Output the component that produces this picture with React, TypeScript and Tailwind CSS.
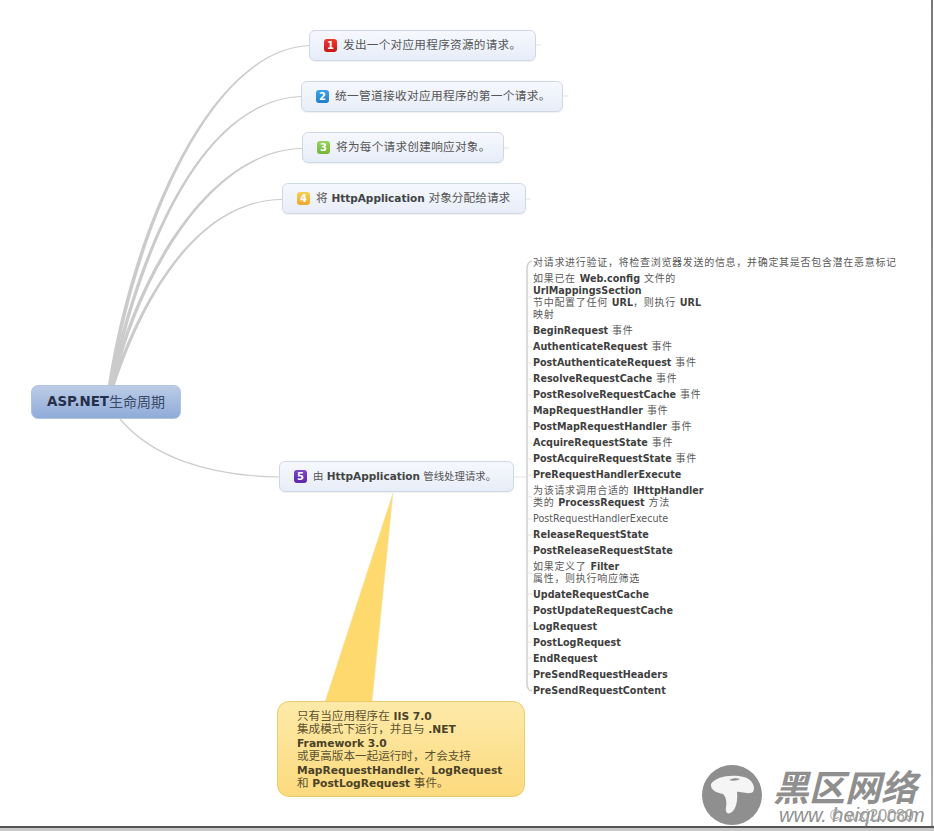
function B({ children, className = 'text-[9.6px] tracking-normal text-[#3f3f3f]' }: { children: React.ReactNode; className?: string }) {
  return <span className={`font-bold ${className}`}>{children}</span>;
}

const eventRows: React.ReactNode[] = [
  <>对请求进行验证，将检查浏览器发送的信息，并确定其是否包含潜在恶意标记</>,
  <>如果已在 <B>Web.config</B> 文件的<br /><B>UrlMappingsSection</B><br />节中配置了任何 <B>URL</B>，则执行 <B>URL</B><br />映射</>,
  <><B>BeginRequest</B> 事件</>,
  <><B>AuthenticateRequest</B> 事件</>,
  <><B>PostAuthenticateRequest</B> 事件</>,
  <><B>ResolveRequestCache</B> 事件</>,
  <><B>PostResolveRequestCache</B> 事件</>,
  <><B>MapRequestHandler</B> 事件</>,
  <><B>PostMapRequestHandler</B> 事件</>,
  <><B>AcquireRequestState</B> 事件</>,
  <><B>PostAcquireRequestState</B> 事件</>,
  <><B>PreRequestHandlerExecute</B></>,
  <>为该请求调用合适的 <B>IHttpHandler</B><br />类的 <B>ProcessRequest</B> 方法</>,
  <span className="text-[9.6px] tracking-normal">PostRequestHandlerExecute</span>,
  <><B>ReleaseRequestState</B></>,
  <><B>PostReleaseRequestState</B></>,
  <>如果定义了 <B>Filter</B><br />属性，则执行响应筛选</>,
  <><B>UpdateRequestCache</B></>,
  <><B>PostUpdateRequestCache</B></>,
  <><B>LogRequest</B></>,
  <><B>PostLogRequest</B></>,
  <><B>EndRequest</B></>,
  <><B>PreSendRequestHeaders</B></>,
  <><B>PreSendRequestContent</B></>,
];

function Badge({ n, className }: { n: number; className: string }) {
  return (
    <span className={`flex h-[13px] w-[13px] shrink-0 items-center justify-center rounded-[3px] bg-gradient-to-b text-[10px] leading-none font-bold tracking-normal text-white ${className}`}>
      {n}
    </span>
  );
}

function Topic({ n, badge, className, children }: { n: number; badge: string; className: string; children: React.ReactNode }) {
  return (
    <div className={`absolute flex h-[31px] items-center gap-[6px] rounded-[6px] border border-[#d0d7e4] bg-gradient-to-b from-[#f6f8fd] to-[#e7edf8] pl-[14px] text-[#555555] shadow-[0_1px_1px_rgba(0,0,0,0.06)] ${className}`}>
      <Badge n={n} className={badge} />
      <span className="pt-[1px] whitespace-nowrap">{children}</span>
    </div>
  );
}

const topicBold = 'text-[10.5px] tracking-normal text-[#444444]';
const noteBold = 'text-[10.7px] text-[#4a4228]';

export default function App() {
  return (
    <div className="relative h-[831px] w-[934px] overflow-hidden bg-white font-['DejaVu_Sans','Noto_Sans_CJK_SC',sans-serif]">
      {/* connectors and callout pointer */}
      <svg className="absolute inset-0" width="934" height="831" fill="none">
        <path d="M108 385 C130 240 205 50 309 45 L309 46 C206 51 133 245 112 385 Z" fill="#cbcbcb" />
        <path d="M109 385 C138 250 200 100 301 96 L301 97 C201 101 140 255 113 385 Z" fill="#cbcbcb" />
        <path d="M110 385 C138 270 210 150 302 148 L302 149 C211 151 140 275 114 385 Z" fill="#cbcbcb" />
        <path d="M111 385 C140 300 195 200 282 199 L282 200 C196 201 142 303 115 385 Z" fill="#cbcbcb" />
        <path d="M120 419 C150 455 205 476 279 477" stroke="#cccccc" strokeWidth="1.2" />
        <path d="M536 45H541M563 96H568M504 148H509M526 199H531M514 477H526" stroke="#e2e2e2" />
        <path d="M532 261 Q527 262 527 269 V684 Q527 690 532 691" stroke="#d2d2d2" strokeWidth="1.6" />
        <path d="M527 297H532M527 331H532M527 347H532M527 363H532M527 379H532M527 395H532M527 411H532M527 427H532M527 443H532M527 459H532M527 475H532M527 497H532M527 519H532M527 535H532M527 551H532M527 573H532M527 594H532M527 610H532M527 626H532M527 642H532M527 658H532M527 674H532" stroke="#e2e2e2" />
        <polygon points="393,493 372,702 325,702" fill="#fdd96e" stroke="#f6e3a6" strokeWidth="0.6" />
      </svg>

      {/* root */}
      <div className="absolute top-[385px] left-[31px] flex h-[34px] w-[150px] items-center justify-center rounded-[7px] border border-[#b3c4e0] bg-gradient-to-b from-[#bccce6] to-[#8fabd9] text-[14px] text-[#3a4866]">
        <span className="text-[13.4px] font-bold text-[#26304a]">ASP.NET</span>生命周期
      </div>

      <Topic n={1} badge="from-[#ec3a30] to-[#c81412]" className="top-[30px] left-[309px] w-[227px] text-[11.6px] tracking-[0.3px]">发出一个对应用程序资源的请求。</Topic>
      <Topic n={2} badge="from-[#3ba4e6] to-[#1f7fcc]" className="top-[81px] left-[301px] w-[262px] text-[11.7px] tracking-[0.3px]">统一管道接收对应用程序的第一个请求。</Topic>
      <Topic n={3} badge="from-[#9bd35a] to-[#74b533]" className="top-[132px] left-[302px] w-[202px] text-[11.6px] tracking-[0.3px]">将为每个请求创建响应对象。</Topic>
      <Topic n={4} badge="from-[#f7cf55] to-[#eba92c]" className="top-[183px] left-[282px] w-[244px] text-[11.7px]">将 <B className={topicBold}>HttpApplication</B> 对象分配给请求</Topic>
      <Topic n={5} badge="from-[#7d45c8] to-[#5a28a5]" className="top-[461px] left-[279px] w-[235px] text-[10.4px]">由 <B className={topicBold}>HttpApplication</B> 管线处理请求。</Topic>

      {/* event list */}
      <div className="absolute top-[257px] left-[533px] flex flex-col gap-1 text-[10px] leading-[12px] tracking-[0.7px] whitespace-nowrap text-[#5a5a5a]">
        {eventRows.map((row, i) => (
          <div key={i}>{row}</div>
        ))}
      </div>

      {/* callout */}
      <div className="absolute top-[701px] left-[277px] h-[96px] w-[248px] rounded-[12px] border border-[#eccb6c] bg-gradient-to-b from-[#fdeaa8] to-[#fcda7e] pt-[8px] pl-[19px] text-[11.6px] leading-[13.4px] whitespace-nowrap text-[#5c5230]">
        只有当应用程序在 <B className={noteBold}>IIS 7.0</B><br />
        集成模式下运行，并且与 <B className={noteBold}>.NET</B><br />
        <B className={noteBold}>Framework 3.0</B><br />
        或更高版本一起运行时，才会支持<br />
        <B className={noteBold}>MapRequestHandler</B>、<B className={noteBold}>LogRequest</B><br />
        和 <B className={noteBold}>PostLogRequest</B> 事件。
      </div>

      {/* watermark */}
      <div className="absolute top-[765px] left-[702px] flex items-start gap-[11px]">
        <div className="h-[60px] w-[60px] rounded-full bg-[#8f8f8f]">
          <svg width="60" height="60" viewBox="0 0 60 60">
            <path d="M9 19 C14 11 30 9 42 12 C50 14 54 22 51 27 C46 30 38 26 35 27 C36 35 34 44 30 47 C26 50 23 48 24 42 C25 37 24 32 21 29 C15 28 8 25 9 19 Z" fill="#f5f5f5" />
            <path d="M27 15 C31 13 35 13 38 14 C35 16 30 16 27 15 Z" fill="#8f8f8f" />
          </svg>
        </div>
        <div className="flex flex-col items-start whitespace-nowrap text-[#8f8f8f]">
          <div className="h-[40px] font-['Noto_Sans_CJK_SC',sans-serif] text-[36px] leading-[40px] font-bold italic">黑区网络</div>
          <div className="relative h-[20px] pl-[6px] font-['Liberation_Sans',sans-serif] text-[20px] leading-[20px] italic">
            www. heiqu.com
            <span className="absolute top-[2px] left-[57px] text-[16px] leading-[18px] not-italic text-[#a5a5a5]">© wxj20089</span>
          </div>
        </div>
      </div>

      {/* frame edge */}
      <div className="absolute top-0 right-[1px] bottom-[4px] w-[2px] bg-gradient-to-b from-[#7a7a7a] to-[#b0b0b0]" />
      <div className="absolute right-0 bottom-[3px] left-0 h-[2px] bg-[#555555]" />
      <div className="absolute right-0 bottom-0 left-0 h-[3px] bg-[#c8c8c8]" />
    </div>
  );
}
